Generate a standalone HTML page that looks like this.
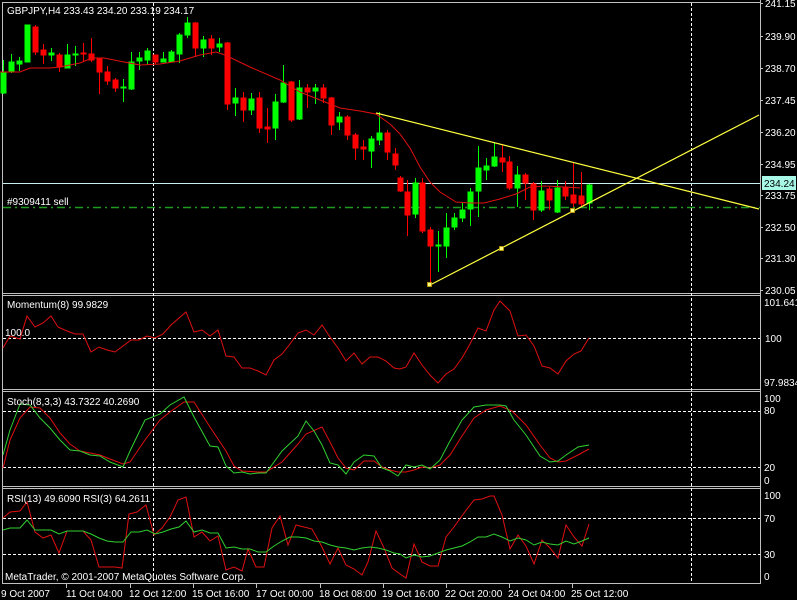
<!DOCTYPE html>
<html><head><meta charset="utf-8"><style>
html,body{margin:0;padding:0;background:#000;}
svg{display:block}
text{font-family:"Liberation Sans",sans-serif;font-size:10px;fill:#fff}
</style></head><body>
<svg width="797" height="600" viewBox="0 0 797 600" xmlns="http://www.w3.org/2000/svg">
<rect width="797" height="600" fill="#000"/>
<!-- frame -->
<g stroke="#c0c0c0" fill="none" stroke-width="1">
<line x1="2" y1="2.5" x2="760" y2="2.5"/>
<line x1="2.5" y1="2" x2="2.5" y2="584"/>
<line x1="760.5" y1="0" x2="760.5" y2="584"/>
<line x1="2" y1="583.5" x2="760" y2="583.5"/>
<line x1="2" y1="293.5" x2="760" y2="293.5"/><line x1="2" y1="295.5" x2="760" y2="295.5"/>
<line x1="2" y1="389.5" x2="760" y2="389.5"/><line x1="2" y1="391.5" x2="760" y2="391.5"/>
<line x1="2" y1="486.5" x2="760" y2="486.5"/><line x1="2" y1="488.5" x2="760" y2="488.5"/>
</g>
<!-- vertical dashed -->
<g stroke="#fff" stroke-dasharray="3,2" stroke-width="1">
<line x1="153.5" y1="3" x2="153.5" y2="583"/>
<line x1="691.5" y1="3" x2="691.5" y2="583"/>
<line x1="3" y1="338.5" x2="760" y2="338.5"/>
<line x1="3" y1="411.5" x2="760" y2="411.5"/>
<line x1="3" y1="467.5" x2="760" y2="467.5"/>
<line x1="3" y1="518.5" x2="760" y2="518.5"/>
<line x1="3" y1="554.5" x2="760" y2="554.5"/>
</g>
<!-- price lines -->
<line x1="3" y1="183.5" x2="760" y2="183.5" stroke="#c8f0f0"/>
<line x1="3" y1="207.5" x2="760" y2="207.5" stroke="#1f9b1f" stroke-width="1.5" stroke-dasharray="8,4,2,4"/>
<!-- candles -->
<g stroke-width="1">
<g stroke="#00ff00" fill="#00ff00">
<line x1="3.5" y1="60" x2="3.5" y2="94"/><rect x="1" y="72" width="5" height="21"/>
<line x1="11.5" y1="54" x2="11.5" y2="73"/><rect x="9" y="62" width="5" height="10"/>
<line x1="19.5" y1="57" x2="19.5" y2="71"/><rect x="17" y="61" width="5" height="3"/>
<line x1="27.5" y1="25" x2="27.5" y2="62"/><rect x="25" y="25" width="5" height="37"/>
<line x1="51.5" y1="48" x2="51.5" y2="61"/><rect x="49" y="53" width="5" height="2"/>
<line x1="67.5" y1="44" x2="67.5" y2="68"/><rect x="65" y="55" width="5" height="13"/>
<line x1="75.5" y1="46" x2="75.5" y2="66"/><rect x="73" y="54" width="5" height="1"/>
<line x1="123.5" y1="79" x2="123.5" y2="102"/><rect x="121" y="87" width="5" height="1"/>
<line x1="131.5" y1="52" x2="131.5" y2="90"/><rect x="129" y="62" width="5" height="27"/>
<line x1="139.5" y1="52" x2="139.5" y2="70"/><rect x="137" y="58" width="5" height="3"/>
<line x1="147.5" y1="48" x2="147.5" y2="65"/><rect x="145" y="51" width="5" height="9"/>
<line x1="163.5" y1="52" x2="163.5" y2="62"/><rect x="161" y="59" width="5" height="3"/>
<line x1="171.5" y1="50" x2="171.5" y2="62"/><rect x="169" y="52" width="5" height="10"/>
<line x1="179.5" y1="33" x2="179.5" y2="63"/><rect x="177" y="35" width="5" height="19"/>
<line x1="187.5" y1="17" x2="187.5" y2="38"/><rect x="185" y="23" width="5" height="12"/>
<line x1="203.5" y1="36" x2="203.5" y2="57"/><rect x="201" y="40" width="5" height="8"/>
<line x1="219.5" y1="38" x2="219.5" y2="52"/><rect x="217" y="44" width="5" height="3"/>
<line x1="235.5" y1="88" x2="235.5" y2="116"/><rect x="233" y="98" width="5" height="5"/>
<line x1="251.5" y1="93" x2="251.5" y2="115"/><rect x="249" y="99" width="5" height="11"/>
<line x1="275.5" y1="94" x2="275.5" y2="140"/><rect x="273" y="102" width="5" height="26"/>
<line x1="283.5" y1="65" x2="283.5" y2="103"/><rect x="281" y="83" width="5" height="19"/>
<line x1="299.5" y1="80" x2="299.5" y2="120"/><rect x="297" y="88" width="5" height="31"/>
<line x1="315.5" y1="84" x2="315.5" y2="104"/><rect x="313" y="88" width="5" height="3"/>
<line x1="339.5" y1="112" x2="339.5" y2="130"/><rect x="337" y="117" width="5" height="5"/>
<line x1="371.5" y1="136" x2="371.5" y2="168"/><rect x="369" y="139" width="5" height="12"/>
<line x1="379.5" y1="112" x2="379.5" y2="145"/><rect x="377" y="133" width="5" height="7"/>
<line x1="415.5" y1="178" x2="415.5" y2="218"/><rect x="413" y="183" width="5" height="31"/>
<line x1="438.5" y1="231" x2="438.5" y2="272"/><rect x="436" y="245" width="5" height="1"/>
<line x1="446.5" y1="213" x2="446.5" y2="258"/><rect x="444" y="228" width="5" height="18"/>
<line x1="454.5" y1="213" x2="454.5" y2="230"/><rect x="452" y="218" width="5" height="9"/>
<line x1="462.5" y1="203" x2="462.5" y2="222"/><rect x="460" y="210" width="5" height="8"/>
<line x1="470.5" y1="188" x2="470.5" y2="226"/><rect x="468" y="192" width="5" height="17"/>
<line x1="478.5" y1="146" x2="478.5" y2="217"/><rect x="476" y="168" width="5" height="23"/>
<line x1="486.5" y1="158" x2="486.5" y2="180"/><rect x="484" y="166" width="5" height="4"/>
<line x1="494.5" y1="142" x2="494.5" y2="167"/><rect x="492" y="157" width="5" height="9"/>
<line x1="517.5" y1="166" x2="517.5" y2="207"/><rect x="515" y="175" width="5" height="13"/>
<line x1="541.5" y1="181" x2="541.5" y2="212"/><rect x="539" y="191" width="5" height="19"/>
<line x1="557.5" y1="180" x2="557.5" y2="213"/><rect x="555" y="188" width="5" height="24"/>
<line x1="589.5" y1="184" x2="589.5" y2="210"/><rect x="587" y="185" width="5" height="18"/>
</g>
<g stroke="#ff0000" fill="#ff0000">
<line x1="35.5" y1="25" x2="35.5" y2="55"/><rect x="33" y="27" width="5" height="25"/>
<line x1="43.5" y1="44" x2="43.5" y2="64"/><rect x="41" y="50" width="5" height="5"/>
<line x1="59.5" y1="53" x2="59.5" y2="72"/><rect x="57" y="55" width="5" height="12"/>
<line x1="83.5" y1="43" x2="83.5" y2="62"/><rect x="81" y="53" width="5" height="1"/>
<line x1="91.5" y1="38" x2="91.5" y2="62"/><rect x="89" y="54" width="5" height="6"/>
<line x1="99.5" y1="58" x2="99.5" y2="94"/><rect x="97" y="59" width="5" height="13"/>
<line x1="107.5" y1="66" x2="107.5" y2="85"/><rect x="105" y="72" width="5" height="9"/>
<line x1="115.5" y1="78" x2="115.5" y2="92"/><rect x="113" y="80" width="5" height="8"/>
<line x1="155.5" y1="55" x2="155.5" y2="64"/><rect x="153" y="55" width="5" height="7"/>
<line x1="195.5" y1="22" x2="195.5" y2="57"/><rect x="193" y="23" width="5" height="25"/>
<line x1="211.5" y1="35" x2="211.5" y2="55"/><rect x="209" y="39" width="5" height="9"/>
<line x1="227.5" y1="42" x2="227.5" y2="110"/><rect x="225" y="43" width="5" height="61"/>
<line x1="243.5" y1="92" x2="243.5" y2="122"/><rect x="241" y="98" width="5" height="12"/>
<line x1="259.5" y1="92" x2="259.5" y2="133"/><rect x="257" y="98" width="5" height="30"/>
<line x1="267.5" y1="108" x2="267.5" y2="143"/><rect x="265" y="127" width="5" height="2"/>
<line x1="291.5" y1="81" x2="291.5" y2="122"/><rect x="289" y="82" width="5" height="38"/>
<line x1="307.5" y1="84" x2="307.5" y2="108"/><rect x="305" y="88" width="5" height="4"/>
<line x1="323.5" y1="84" x2="323.5" y2="103"/><rect x="321" y="88" width="5" height="10"/>
<line x1="331.5" y1="97" x2="331.5" y2="135"/><rect x="329" y="98" width="5" height="27"/>
<line x1="347.5" y1="115" x2="347.5" y2="140"/><rect x="345" y="117" width="5" height="18"/>
<line x1="355.5" y1="133" x2="355.5" y2="160"/><rect x="353" y="135" width="5" height="13"/>
<line x1="363.5" y1="140" x2="363.5" y2="160"/><rect x="361" y="147" width="5" height="2"/>
<line x1="387.5" y1="130" x2="387.5" y2="160"/><rect x="385" y="133" width="5" height="19"/>
<line x1="395.5" y1="148" x2="395.5" y2="170"/><rect x="393" y="154" width="5" height="11"/>
<line x1="400.5" y1="176" x2="400.5" y2="192"/><rect x="398" y="178" width="5" height="13"/>
<line x1="407.5" y1="180" x2="407.5" y2="236"/><rect x="405" y="192" width="5" height="23"/>
<line x1="422.5" y1="178" x2="422.5" y2="233"/><rect x="420" y="183" width="5" height="48"/>
<line x1="430.5" y1="227" x2="430.5" y2="284"/><rect x="428" y="230" width="5" height="16"/>
<line x1="502.5" y1="145" x2="502.5" y2="172"/><rect x="500" y="158" width="5" height="4"/>
<line x1="509.5" y1="156" x2="509.5" y2="190"/><rect x="507" y="162" width="5" height="26"/>
<line x1="525.5" y1="173" x2="525.5" y2="200"/><rect x="523" y="175" width="5" height="8"/>
<line x1="533.5" y1="182" x2="533.5" y2="220"/><rect x="531" y="184" width="5" height="26"/>
<line x1="549.5" y1="187" x2="549.5" y2="210"/><rect x="547" y="189" width="5" height="11"/>
<line x1="565.5" y1="181" x2="565.5" y2="200"/><rect x="563" y="187" width="5" height="9"/>
<line x1="573.5" y1="162" x2="573.5" y2="207"/><rect x="571" y="195" width="5" height="8"/>
<line x1="581.5" y1="172" x2="581.5" y2="207"/><rect x="579" y="196" width="5" height="8"/>
</g>
</g>
<!-- MA -->
<polyline fill="none" stroke="#e01010" stroke-width="1" points="0,72 20,72 30,68 50,68 60,67 80,63 92,58 104,58 124,62 140,65 160,64 180,61 200,55 216,52 225,55 250,67 280,80 300,92 320,100 340,108 360,111 376,114 390,124 400,134 410,148 420,167 430,182 440,192 456,202 470,203 484,203 500,199 516,194 530,187 545,186 565,187 580,188"/>
<!-- trendlines -->
<g stroke="#ffff40" stroke-width="1.2" fill="none">
<line x1="376" y1="113" x2="759" y2="209"/>
<line x1="430" y1="285" x2="759" y2="115"/>
</g>
<g fill="#ffff80" stroke="#c8a000" stroke-width="0.8">
<rect x="427.5" y="282.5" width="4" height="4"/>
<rect x="499.5" y="246.5" width="4" height="4"/>
<rect x="570.5" y="208.5" width="4" height="4"/>
</g>
<!-- Momentum -->
<polyline fill="none" stroke="#e01010" points="3,348 10,336 20,339 27,316 35,327 43,323 51,316 58,327 67,331 75,334 83,334 91,352 99,347 107,350 115,352 123,346 131,340 139,340 147,336 155,338 163,334 171,325 179,318 186,312 194,332 202,330 210,336 218,330 226,356 234,357 242,368 250,368 258,371 266,375 274,360 282,354 290,344 298,333 306,330 314,335 322,325 330,337 338,348 346,361 354,353 362,364 370,357 378,357 386,361 394,368 400,369 406,367 414,353 422,365 430,375 438,383 446,374 454,369 462,358 470,344 478,328 486,331 494,310 500,301 510,311 518,336 526,335 534,346 542,366 550,368 558,374 566,361 574,354 581,351 589,338"/>
<!-- Stoch -->
<polyline fill="none" stroke="#e01010" points="3,468 10,440 20,418 30,407 40,408 50,418 60,433 70,444 80,451 90,453 100,455 110,459 123,464 130,462 145,440 160,420 170,412 184,402 194,402 210,427 226,451 234,466 242,471 258,472 266,472 282,462 298,444 306,434 322,427 330,442 338,458 346,468 354,470 364,461 374,461 382,467 390,470 398,472 406,472 414,470 422,467 430,468 440,465 450,455 462,436 474,418 486,410 500,406 512,411 526,425 540,445 550,458 558,462 566,461 578,455 589,449"/>
<polyline fill="none" stroke="#30d030" points="3,455 10,430 20,404 30,405 40,418 50,428 60,440 70,450 80,451 90,455 100,456 110,462 123,467 130,451 145,420 160,414 170,405 184,397 194,417 210,446 218,447 226,466 234,473 242,472 250,474 258,473 266,473 282,451 298,436 306,421 314,431 322,445 330,463 338,465 346,474 354,462 364,455 374,456 382,468 390,471 398,476 406,465 414,467 422,465 430,469 440,460 450,441 462,420 474,407 486,405 500,405 506,406 514,420 526,435 540,456 550,462 558,461 566,455 578,447 589,445"/>
<!-- RSI -->
<polyline fill="none" stroke="#e01010" points="3,518 10,512 20,511 27,502 35,532 43,538 51,535 59,553 67,531 75,531 83,531 91,540 99,567 107,567 115,567 122,568 129,514 137,512 146,505 154,535 162,528 170,517 178,500 186,497 194,537 202,532 210,541 218,536 226,570 234,567 242,571 248,549 256,567 264,567 272,528 280,516 288,545 296,525 304,527 312,529 322,547 330,564 338,548 346,565 354,569 362,575 368,562 376,531 384,548 392,568 400,574 406,578 414,544 422,562 430,566 438,566 446,537 454,527 464,513 474,500 482,499 490,496 494,496 502,515 510,549 518,535 526,546 534,564 542,540 550,548 558,558 566,525 574,537 582,546 589,524"/>
<polyline fill="none" stroke="#30d030" points="3,530 10,528 20,528 27,520 35,530 43,530 51,530 59,534 67,531 75,531 83,531 91,534 99,538 107,541 115,542 123,542 131,532 139,532 147,530 155,534 163,532 171,529 179,527 186,521 194,532 202,530 210,533 218,533 226,548 234,547 242,549 250,549 258,552 266,552 274,546 282,541 290,537 298,537 306,538 314,541 322,542 330,545 338,547 346,548 354,550 362,548 370,547 378,548 386,550 394,553 400,554 406,558 414,555 422,557 430,556 438,553 446,550 454,548 462,546 470,542 478,537 486,537 494,534 502,537 510,541 518,538 526,540 534,545 542,542 550,544 558,545 566,541 574,544 582,541 589,538"/>
<!-- labels -->
<text x="7" y="14">GBPJPY,H4  233.43 234.20 233.19 234.17</text>
<text x="7" y="205">#9309411 sell</text>
<text x="7" y="308">Momentum(8) 99.9829</text>
<text x="5" y="336">100.0</text>
<text x="7" y="405">Stoch(8,3,3) 43.7322 40.2690</text>
<text x="7" y="502">RSI(13) 49.6090  RSI(3) 64.2611</text>
<text x="5" y="580">MetaTrader, © 2001-2007 MetaQuotes Software Corp.</text>
<!-- right axis -->
<g stroke="#c0c0c0">
<line x1="760" y1="3.5" x2="763" y2="3.5"/><line x1="760" y1="36.5" x2="763" y2="36.5"/><line x1="760" y1="68.5" x2="763" y2="68.5"/><line x1="760" y1="100.5" x2="763" y2="100.5"/><line x1="760" y1="132.5" x2="763" y2="132.5"/><line x1="760" y1="164.5" x2="763" y2="164.5"/><line x1="760" y1="195.5" x2="763" y2="195.5"/><line x1="760" y1="227.5" x2="763" y2="227.5"/><line x1="760" y1="258.5" x2="763" y2="258.5"/><line x1="760" y1="290.5" x2="763" y2="290.5"/>
</g>
<g>
<text x="765" y="7">241.15</text>
<text x="765" y="40">239.90</text>
<text x="765" y="72">238.70</text>
<text x="765" y="104">237.45</text>
<text x="765" y="136">236.20</text>
<text x="765" y="168">234.95</text>
<text x="765" y="199">233.75</text>
<text x="765" y="231">232.50</text>
<text x="765" y="262">231.30</text>
<text x="765" y="294">230.05</text>
<text x="764" y="306">101.6410</text>
<text x="765" y="342">100</text>
<text x="764" y="386">97.9834</text>
<text x="764" y="402">100</text>
<text x="764" y="414">80</text>
<text x="764" y="471">20</text>
<text x="764" y="484">0</text>
<text x="764" y="499">100</text>
<text x="764" y="522">70</text>
<text x="764" y="558">30</text>
<text x="764" y="580">0</text>
</g>
<rect x="762" y="176" width="34" height="14" fill="#a8f8e8"/>
<text x="764" y="187" style="fill:#000">234.24</text>
<!-- time axis -->
<g stroke="#c0c0c0">
<line x1="66.5" y1="584" x2="66.5" y2="588"/><line x1="130.5" y1="584" x2="130.5" y2="588"/><line x1="193.5" y1="584" x2="193.5" y2="588"/><line x1="256.5" y1="584" x2="256.5" y2="588"/><line x1="320.5" y1="584" x2="320.5" y2="588"/><line x1="383.5" y1="584" x2="383.5" y2="588"/><line x1="446.5" y1="584" x2="446.5" y2="588"/><line x1="509.5" y1="584" x2="509.5" y2="588"/><line x1="572.5" y1="584" x2="572.5" y2="588"/>
</g>
<text x="1" y="597">9 Oct 2007</text>
<text x="66" y="597">11 Oct 04:00</text>
<text x="129" y="597">12 Oct 12:00</text>
<text x="192" y="597">15 Oct 16:00</text>
<text x="256" y="597">17 Oct 00:00</text>
<text x="319" y="597">18 Oct 08:00</text>
<text x="382" y="597">19 Oct 16:00</text>
<text x="445" y="597">22 Oct 20:00</text>
<text x="508" y="597">24 Oct 04:00</text>
<text x="571" y="597">25 Oct 12:00</text>
</svg>
</body></html>
